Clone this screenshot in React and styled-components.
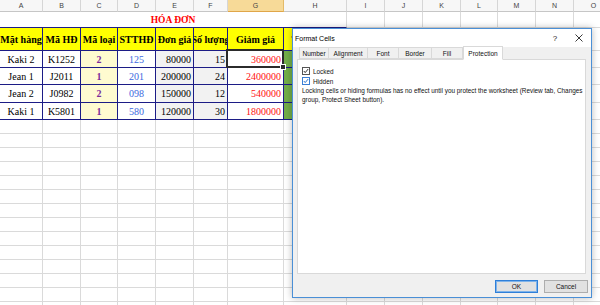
import React from 'react';
import styled, { createGlobalStyle } from 'styled-components';

const GlobalStyle = createGlobalStyle`
  html, body {
    margin: 0;
    padding: 0;
    background: #fff;
  }
`;

// column widths of the visible sheet, A..O
const cols = [43, 38, 37, 38, 38, 34, 56, 63, 38, 38, 38, 37, 38, 38, 40];
const letters = 'ABCDEFGHIJKLMNO'.split('');
const template = cols.map(c => c + 'px').join(' ');

const NAVY = '#1c1c86';
const GRID = '#dadada';

const Screen = styled.div`
  position: relative;
  width: 600px;
  height: 305px;
  overflow: hidden;
  font-family: "Liberation Serif", serif;
`;

const Sheet = styled.div`
  display: flex;
  flex-direction: column;
`;

const Row = styled.div`
  display: grid;
  grid-template-columns: ${template};
  height: ${p => p.$h}px;
  flex: none;
`;

const ColHead = styled.div`
  display: flex;
  align-items: center;
  justify-content: center;
  box-sizing: border-box;
  font: 7px "Liberation Sans", sans-serif;
  color: #444;
  background: ${p => (p.$active ? '#f7da98' : '#f7f7f7')};
  border-right: 1px solid ${p => (p.$active ? '#e4bb68' : '#d6d6d6')};
  border-bottom: 1px solid ${p => (p.$active ? '#e0a649' : '#c6c6c6')};
`;

const Cell = styled.div`
  position: relative;
  display: flex;
  align-items: center;
  justify-content: ${p => (p.$align === 'right' ? 'flex-end' : 'center')};
  grid-column: span ${p => p.$span || 1};
  padding: 0 2px;
  box-sizing: border-box;
  overflow: ${p => (p.$selected ? 'visible' : 'hidden')};
  white-space: nowrap;
  background: ${p => p.$bg || '#fff'};
  color: ${p => p.$color || '#000'};
  font-size: ${p => p.$size || 10}px;
  font-weight: ${p => (p.$bold ? 700 : 400)};
  border-right: 1px solid ${p => (p.$frame ? NAVY : GRID)};
  border-bottom: 1px solid ${p => (p.$frame || p.$frameBottom ? NAVY : GRID)};
`;

const Selection = styled.div`
  position: absolute;
  left: -2px;
  top: -2px;
  right: -1px;
  bottom: -1px;
  border: 2px solid #2b2b2b;
  z-index: 1;
  pointer-events: none;

  &::after {
    content: '';
    position: absolute;
    right: -4px;
    bottom: -4px;
    width: 4px;
    height: 4px;
    background: #2b2b2b;
    border: 1px solid #fff;
  }
`;

/* ---------- dialog ---------- */

const Dialog = styled.div`
  position: absolute;
  left: 292px;
  top: 28px;
  width: 300px;
  height: 270px;
  box-sizing: border-box;
  border: 1px solid #4a8fd6;
  background: #f0f0f0;
  box-shadow: 0 0 7px rgba(0, 0, 0, 0.28);
  display: flex;
  flex-direction: column;
  font-family: "Liberation Sans", sans-serif;
  color: #000;
  z-index: 5;
`;

const TitleBar = styled.div`
  height: 18px;
  flex: none;
  background: #fff;
  display: flex;
  align-items: center;
  padding-left: 2px;
  font-size: 7px;
`;

const Title = styled.span`
  flex: 1;
`;

const TitleButton = styled.div`
  width: 24px;
  height: 18px;
  display: flex;
  align-items: center;
  justify-content: center;
  font-size: 8px;
  color: #222;
`;

const TabStrip = styled.div`
  display: flex;
  align-items: flex-end;
  height: 12px;
  margin-left: 6px;
  flex: none;
`;

const Tab = styled.div`
  box-sizing: border-box;
  height: ${p => (p.$active ? 14 : 12)}px;
  margin-bottom: ${p => (p.$active ? -1 : 0)}px;
  width: ${p => p.$w}px;
  display: flex;
  align-items: center;
  justify-content: center;
  font-size: 6.5px;
  color: #111;
  background: ${p => (p.$active ? '#fff' : '#f0f0f0')};
  border: 1px solid #d9d9d9;
  border-bottom: ${p => (p.$active ? '1px solid #fff' : '1px solid #d9d9d9')};
  border-left: ${p => (p.$first || p.$active ? '1px solid #d9d9d9' : 'none')};
  position: relative;
  z-index: ${p => (p.$active ? 2 : 1)};
`;

const Panel = styled.div`
  margin: 0 5px 0 4px;
  height: 215px;
  flex: none;
  box-sizing: border-box;
  background: #fff;
  border: 1px solid #d9d9d9;
  padding: 6px 4px 0;
  font-size: 6.4px;
  color: #111;
`;

const CheckRow = styled.label`
  display: flex;
  align-items: center;
  gap: 3px;
  height: 10px;
`;

const Note = styled.p`
  margin: 0;
  line-height: 9px;
  white-space: nowrap;
`;

const Footer = styled.div`
  flex: 1;
  display: flex;
  justify-content: flex-end;
  align-items: flex-start;
  gap: 6px;
  padding: 6px 3px 0 0;
`;

const Button = styled.button`
  width: ${p => p.$w}px;
  height: 13px;
  box-sizing: border-box;
  padding: 0;
  font: 6.5px "Liberation Sans", sans-serif;
  color: #111;
  background: #e1e1e1;
  border: 1px solid ${p => (p.$default ? '#2f7fd8' : '#adadad')};
  box-shadow: ${p => (p.$default ? 'inset 0 0 0 1px #7fb3ea' : 'none')};
`;

const Check = ({ blue }) => (
  <svg width="8" height="8" viewBox="0 0 8 8">
    <rect x="0.5" y="0.5" width="7" height="7" fill="#fff" stroke={blue ? '#3b7fd5' : '#555'} />
    <polyline points="1.8,4 3.2,5.6 6.2,2" fill="none" stroke={blue ? '#2f78d2' : '#333'} strokeWidth="1" />
  </svg>
);

const CloseIcon = () => (
  <svg width="8" height="8" viewBox="0 0 8 8">
    <path d="M0.5 0.5 L7.5 7.5 M7.5 0.5 L0.5 7.5" stroke="#222" strokeWidth="0.9" />
  </svg>
);

const headers = ['Mặt hàng', 'Mã HĐ', 'Mã loại', 'STTHĐ', 'Đơn giá', 'Số lượng', 'Giảm giá', 'Thành tiền'];

const rows = [
  ['Kaki 2', 'K1252', '2', '125', '80000', '15', '360000'],
  ['Jean 1', 'J2011', '1', '201', '200000', '24', '2400000'],
  ['Jean 2', 'J0982', '2', '098', '150000', '12', '540000'],
  ['Kaki 1', 'K5801', '1', '580', '120000', '30', '1800000'],
];

// how each table column looks
const colStyle = [
  {},
  {},
  { $bg: '#fffbd0', $color: '#7a2a9a', $bold: true },
  { $color: '#3b68e0' },
  { $bg: '#f2f2f2', $align: 'right' },
  { $bg: '#f2f2f2', $align: 'right' },
  { $color: '#ff1010', $align: 'right' },
  { $bg: '#72ad48' },
];

const tabs = [
  ['Number', 30],
  ['Alignment', 39],
  ['Font', 31],
  ['Border', 33],
  ['Fill', 31],
  ['Protection', 40],
];

const blankCells = from =>
  cols.slice(from).map((_, i) => <Cell key={from + i} />);

export default function App() {
  const emptyRows = Array.from({ length: 14 });

  return (
    <Screen>
      <GlobalStyle />
      <Sheet>
        <Row $h={12}>
          {letters.map(l => (
            <ColHead key={l} $active={l === 'G'}>{l}</ColHead>
          ))}
        </Row>

        <Row $h={16}>
          <Cell $span={8} $frameBottom $bold $color="#ff0000" $size={9.5}>HÓA ĐƠN</Cell>
          {blankCells(8)}
        </Row>

        <Row $h={23}>
          {headers.map(h => (
            <Cell key={h} $frame $bg="#ffff00" $bold>{h}</Cell>
          ))}
          {blankCells(8)}
        </Row>

        {rows.map((r, ri) => (
          <Row key={ri} $h={ri === 2 ? 18 : 17}>
            {r.map((v, ci) => (
              <Cell key={ci} $frame {...colStyle[ci]} $selected={ri === 0 && ci === 6}>
                {v}
                {ri === 0 && ci === 6 && <Selection />}
              </Cell>
            ))}
            <Cell $frame {...colStyle[7]} />
            {blankCells(8)}
          </Row>
        ))}

        {emptyRows.map((_, i) => (
          <Row key={'e' + i} $h={14}>{blankCells(0)}</Row>
        ))}
      </Sheet>

      <Dialog>
        <TitleBar>
          <Title>Format Cells</Title>
          <TitleButton>?</TitleButton>
          <TitleButton><CloseIcon /></TitleButton>
        </TitleBar>

        <TabStrip>
          {tabs.map(([t, w], i) => (
            <Tab key={t} $w={w} $first={i === 0} $active={t === 'Protection'}>{t}</Tab>
          ))}
        </TabStrip>

        <Panel>
          <CheckRow><Check /> Locked</CheckRow>
          <CheckRow><Check blue /> Hidden</CheckRow>
          <Note>
            Locking cells or hiding formulas has no effect until you protect the worksheet (Review tab, Changes
            <br />
            group, Protect Sheet button).
          </Note>
        </Panel>

        <Footer>
          <Button $w={43} $default>OK</Button>
          <Button $w={44}>Cancel</Button>
        </Footer>
      </Dialog>
    </Screen>
  );
}
